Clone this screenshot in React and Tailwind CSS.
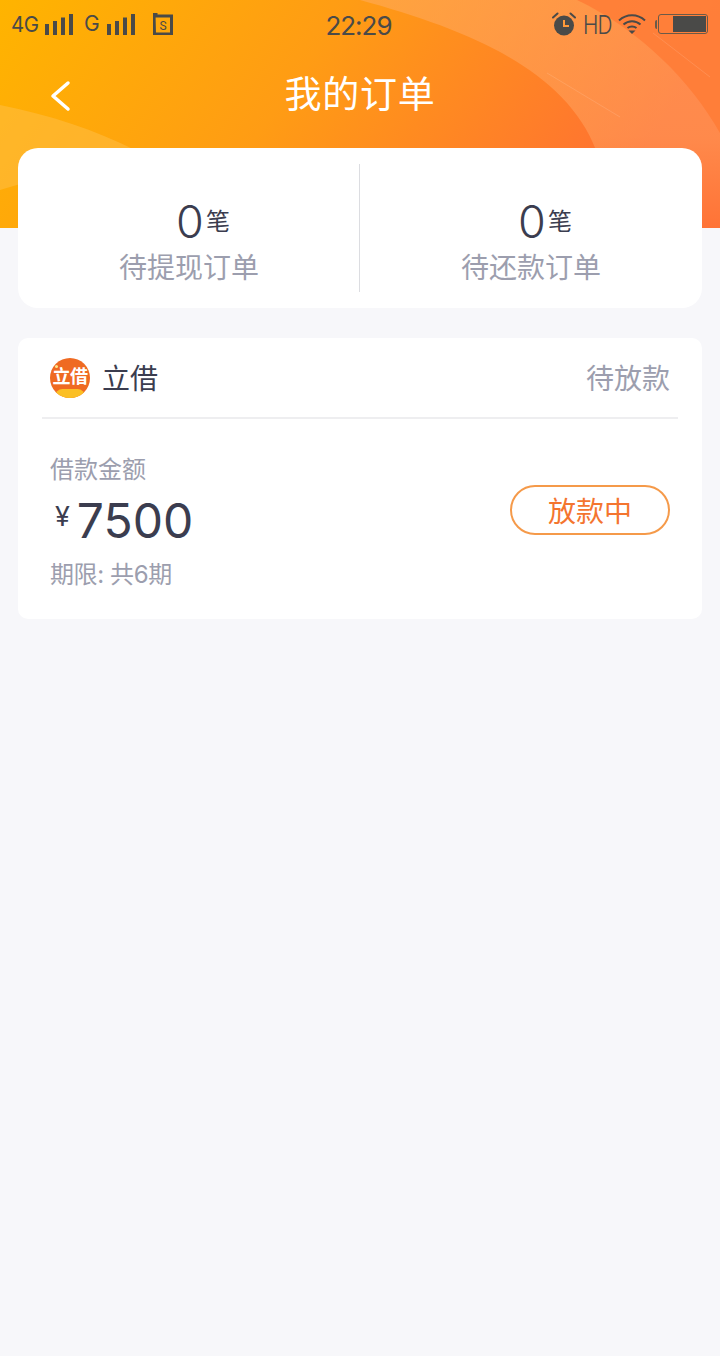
const cjk = "font-['Inter','Noto_Sans_CJK_SC',sans-serif]"

function Signal() {
  return (
    <svg width="28" height="21" viewBox="0 0 28 21" fill="#4a4a48">
      <rect x="0" y="10" width="4" height="11" />
      <rect x="8" y="7" width="4" height="14" />
      <rect x="16" y="3.500" width="4" height="17.500" />
      <rect x="24" y="0" width="4" height="21" />
    </svg>
  )
}

function SimIcon() {
  return (
    <svg width="20" height="22" viewBox="0 0 20 22">
      <path d="M1 1h2v2h15.500v18H1.500z" fill="none" stroke="#4a4a48" strokeWidth="3" />
      <text x="10" y="16.500" textAnchor="middle" fontSize="12" fill="#4a4a48" fontFamily="Roboto, sans-serif">S</text>
    </svg>
  )
}

function Alarm() {
  return (
    <svg width="24" height="24" viewBox="0 0 24 24">
      <circle cx="12" cy="13.500" r="10" fill="#4a4a48" />
      <path d="M12 8v6h5" fill="none" stroke="#ff9a3a" strokeWidth="2" />
      <path d="M1 5.500 5.500 1.500M23 5.500 18.500 1.500" stroke="#4a4a48" strokeWidth="2" strokeLinecap="round" />
    </svg>
  )
}

function Wifi() {
  return (
    <svg width="28" height="22" viewBox="0 0 28 22" fill="none" stroke="#4a4a48" strokeWidth="2">
      <path d="M1 7.500C8.500 .5 19.500 .5 27 7.500" />
      <path d="M5.500 11.500C10.500 7 17.500 7 22.500 11.500" />
      <path d="M9.500 15C12 13 16 13 18.500 15" />
      <path d="M10.500 17.500h7L14 21z" fill="#4a4a48" stroke="none" />
    </svg>
  )
}

function Battery() {
  return (
    <div className="flex items-center">
      <div className="h-[9px] w-[2px] rounded-l-sm bg-[#6b5a48]" />
      <div className="ml-px flex h-[20px] w-[50px] justify-end rounded-[3px] border border-[#6b5a48] p-px">
        <div className="h-full w-[33px] bg-[#4a4a48]" />
      </div>
    </div>
  )
}

function LogoMark() {
  return (
    <div className="relative flex h-10 w-10 items-center justify-center overflow-hidden rounded-full bg-[#ef6a22]">
      <span className={`${cjk} mb-[2px] text-[18px] font-bold leading-none tracking-[-0.5px] text-white`}>立借</span>
      <div className="absolute left-[5px] top-[7px] h-[3px] w-[3px] rounded-full bg-[#fde68a]" />
      <div className="absolute -bottom-[6px] left-[5px] h-[15px] w-[30px] rounded-full bg-[#fbbf24]" />
    </div>
  )
}

function Stat({ label }) {
  return (
    <div className="flex flex-1 flex-col items-center pt-[48px]">
      <div className="flex items-center pl-[28px]">
        <span className="text-[45px] font-light leading-[52px] text-[#3b3d4f]">0</span>
        <span className="ml-[2px] text-[24px] leading-none text-[#3b3d4f]">笔</span>
      </div>
      <span className="text-[28px] leading-[40px] text-[#9c9eae]">{label}</span>
    </div>
  )
}

export default function App() {
  return (
    <div className={`${cjk} min-h-[1356px] bg-[#f7f7fa]`}>
      <header className="relative h-[228px] overflow-hidden bg-[linear-gradient(125deg,#ffb400_0%,#ff9c14_40%,#ff7033_85%)]">
        <svg className="absolute inset-0" width="720" height="228" viewBox="0 0 720 228">
          <defs>
            <linearGradient id="band" x1="0" y1="0" x2="0" y2="1">
              <stop offset="0" stopColor="#ffb070" stopOpacity="0.45" />
              <stop offset="0.6" stopColor="#ffb070" stopOpacity="0.4" />
              <stop offset="1" stopColor="#ffb070" stopOpacity="0.05" />
            </linearGradient>
          </defs>
          <path d="M360 0C470 30 565 70 596 150L620 228H720V0z" fill="url(#band)" />
          <path d="M577 0C640 30 690 80 720 133V0z" fill="#ff7a35" fillOpacity="0.8" />
          <path d="M0 105C50 115 95 130 135 150L0 190z" fill="#ffc04a" fillOpacity="0.5" />
          <path d="M547 73 620 117M653 33 710 77" stroke="#fff" strokeOpacity="0.12" fill="none" />
        </svg>

        <div className="relative flex h-[48px] items-center pl-[11px] pr-[12px] text-[#4a4a48]">
          <span className="w-[27px] origin-left scale-x-[0.93] text-[22px] tracking-[-0.5px]">4G</span>
          <div className="ml-[7px]"><Signal /></div>
          <span className="ml-[11px] text-[21px]">G</span>
          <div className="ml-[7px]"><Signal /></div>
          <div className="ml-[18px]"><SimIcon /></div>
          <span className="absolute left-0 right-[3px] top-[6px] text-center text-[26px] tracking-[-1px]">22:29</span>
          <div className="ml-auto flex items-center">
            <Alarm />
            <span className="ml-[7px] w-[29px] origin-left scale-x-[0.8] text-[26px] font-light tracking-[-1px]">HD</span>
            <div className="ml-[6px]"><Wifi /></div>
            <div className="ml-[9px]"><Battery /></div>
          </div>
        </div>

        <div className="relative flex h-[92px] items-center justify-center">
          <svg className="absolute left-[48px] top-[32px]" width="26" height="32" viewBox="0 0 26 32" fill="none" stroke="#fff" strokeWidth="3.500" strokeLinecap="round" strokeLinejoin="round">
            <path d="M20 3 5 16 20 29" />
          </svg>
          <h1 className="pt-[1px] text-[37px] font-normal tracking-[0.8px] text-white">我的订单</h1>
        </div>
      </header>

      <main className="relative -mt-[80px] flex flex-col gap-[30px] px-[18px]">
        <section className="flex h-[160px] rounded-[20px] bg-white">
          <Stat label="待提现订单" />
          <div className="my-[16px] -ml-px w-px bg-[#dcdde1]" />
          <Stat label="待还款订单" />
        </section>

        <section className="h-[281px] rounded-[10px] bg-white px-[24px]">
          <div className="flex h-[81px] items-center justify-between border-b-2 border-[#eeeef0] px-[8px]">
            <div className="flex items-center">
              <LogoMark />
              <span className="ml-[12px] pt-[3px] text-[28px] text-[#3b3d4f]">立借</span>
            </div>
            <span className="pt-[2px] text-[28px] text-[#9c9eae]">待放款</span>
          </div>

          <div className="flex items-start justify-between px-[8px]">
            <div>
              <div className="mt-[33px] text-[24px] leading-[36px] text-[#9c9eae]">借款金额</div>
              <div className="mt-[3px] flex items-center pl-[5px]">
                <span className="mb-[10px] text-[27px] leading-none text-[#3b3d4f]">¥</span>
                <span className="ml-[7px] text-[48px] font-normal leading-[60px] text-[#3b3d4f]">7500</span>
              </div>
              <div className="mt-[7px] text-[24px] leading-[34px] tracking-[-0.4px] text-[#9c9eae]">期限: 共6期</div>
            </div>
            <div className="mt-[66px] flex h-[50px] w-[160px] items-center justify-center rounded-full border-2 border-[#f59a4a] pt-[3px] text-[28px] text-[#f4752f]">
              放款中
            </div>
          </div>
        </section>
      </main>
    </div>
  )
}
